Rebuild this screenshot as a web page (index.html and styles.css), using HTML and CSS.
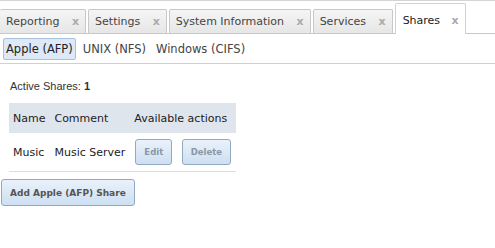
FILE: index.html
```html
<!DOCTYPE html>
<html lang="en">
<head>
    <meta charset="UTF-8">
    <title>Shares</title>
    <link rel="stylesheet" href="styles.css">
</head>
<body>
    <div class="tabs">
        <div class="tab">Reporting <span class="close">x</span></div>
        <div class="tab">Settings <span class="close">x</span></div>
        <div class="tab">System Information <span class="close">x</span></div>
        <div class="tab">Services <span class="close">x</span></div>
        <div class="tab active">Shares <span class="close">x</span></div>
    </div>

    <div class="subtabs">
        <span class="subtab selected">Apple (AFP)</span>
        <span class="subtab">UNIX (NFS)</span>
        <span class="subtab">Windows (CIFS)</span>
    </div>

    <div class="content">
        <p class="count">Active Shares: <b>1</b></p>
        <table class="shares">
            <tr>
                <th>Name</th>
                <th>Comment</th>
                <th>Available actions</th>
            </tr>
            <tr>
                <td>Music</td>
                <td>Music Server</td>
                <td class="actions">
                    <button class="small-btn">Edit</button>
                    <button class="small-btn">Delete</button>
                </td>
            </tr>
        </table>
    </div>

    <button class="add-btn">Add Apple (AFP) Share</button>
</body>
</html>
```

FILE: styles.css
```css
body {
    margin: 0;
    font-family: "DejaVu Sans", Verdana, sans-serif;
    font-size: 11px;
    color: #333;
    background: #fff;
}
.tabs {
    display: flex;
    align-items: flex-end;
    gap: 2px;
    height: 34px;
    border-top: 1px solid #d4d4d4;
    border-bottom: 1px solid #c8c8c8;
    box-sizing: border-box;
}
.tab {
    height: 24px;
    line-height: 23px;
    padding: 0 6px;
    background: linear-gradient(#f5f5f5, #e6e6e6);
    border: 1px solid #c8c8c8;
    border-bottom: none;
    border-radius: 2px 2px 0 0;
    box-sizing: border-box;
    color: #444;
    white-space: nowrap;
}
.tab:first-child {
    border-left: none;
}
.tab .close {
    color: #aaa;
    font-weight: bold;
    margin-left: 9px;
}
.tab.active {
    height: 31px;
    line-height: 34px;
    padding: 0 6px 0 7px;
    background: #fff;
    border-color: #c8d4e0;
    margin-bottom: -1px;
    color: #222;
}
.tab.active .close {
    margin-left: 8px;
}
.subtabs {
    display: flex;
    align-items: center;
    gap: 4px;
    height: 29px;
    padding-left: 3px;
    border-bottom: 1px solid #d0d0d0;
    font-size: 11.5px;
}
.subtab {
    padding: 3px 2px;
    border: 1px solid transparent;
    color: #444;
}
.subtab.selected {
    background: #dde9f6;
    border-color: #a9c0da;
    border-radius: 2px;
    color: #222;
}
.content {
    padding: 0 9px;
}
.count {
    font-family: "Liberation Sans", Arial, sans-serif;
    font-size: 11px;
    line-height: 13px;
    margin: 16px 0 10px 1px;
    color: #333;
}
.shares {
    border-collapse: collapse;
    border-bottom: 1px solid #ddd;
}
.shares th {
    background: #dfe5ec;
    font-weight: normal;
    text-align: left;
    height: 30px;
    padding: 0 5px 0 4px;
    color: #222;
}
.shares td {
    height: 38px;
    padding: 0 5px 0 4px;
    color: #222;
}
.shares td.actions {
    white-space: nowrap;
    padding-left: 5px;
}
.small-btn {
    font-family: "DejaVu Sans", Verdana, sans-serif;
    font-size: 8.5px;
    font-weight: bold;
    color: #8a97a6;
    height: 26px;
    padding: 0 8px;
    margin-right: 6px;
    background: linear-gradient(#eaf2fb, #cddff2);
    border: 1px solid #93a9c0;
    border-radius: 3px;
}
.small-btn:last-child {
    margin-right: 0;
}
.add-btn {
    margin: 7px 0 0 1px;
    font-family: "DejaVu Sans", Verdana, sans-serif;
    font-size: 9px;
    font-weight: bold;
    color: #555;
    height: 27px;
    padding: 0 8px;
    background: linear-gradient(#eaf2fb, #cddff2);
    border: 1px solid #93a9c0;
    border-radius: 3px;
}
```
